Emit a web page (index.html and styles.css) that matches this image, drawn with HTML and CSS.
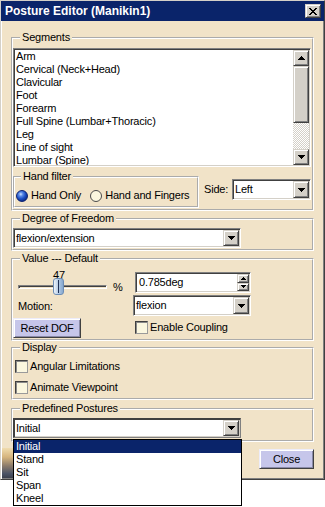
FILE: index.html
```html
<!DOCTYPE html>
<html>
<head>
<meta charset="utf-8">
<title>Posture Editor</title>
<link rel="stylesheet" href="styles.css">
</head>
<body>
<div class="window">
  <div class="titlebar">
    <span class="title">Posture Editor (Manikin1)</span>
    <span class="tclose raised"><svg width="8" height="7" viewBox="0 0 8 7"><path d="M0 0h2v1H0zM6 0h2v1H6zM1 1h2v1H1zM5 1h2v1H5zM2 2h4v1H2zM3 3h2v1H3zM2 4h4v1H2zM1 5h2v1H1zM5 5h2v1H5zM0 6h2v1H0zM6 6h2v1H6z"/></svg></span>
  </div>
  <div class="content">
    <fieldset class="group seg">
      <legend>Segments</legend>
      <div class="listbox sunken">
        <div class="items">
          <div class="item">Arm</div>
          <div class="item">Cervical (Neck+Head)</div>
          <div class="item">Clavicular</div>
          <div class="item">Foot</div>
          <div class="item">Forearm</div>
          <div class="item">Full Spine (Lumbar+Thoracic)</div>
          <div class="item">Leg</div>
          <div class="item">Line of sight</div>
          <div class="item">Lumbar (Spine)</div>
        </div>
        <div class="vscroll">
          <div class="sbtn raised"><svg width="7" height="4" viewBox="0 0 7 4"><path d="M3 0h1v1H3zM2 1h3v1H2zM1 2h5v1H1zM0 3h7v1H0z"/></svg></div>
          <div class="thumb raised"></div>
          <div class="track"></div>
          <div class="sbtn raised"><svg width="7" height="4" viewBox="0 0 7 4"><path d="M0 0h7v1H0zM1 1h5v1H1zM2 2h3v1H2zM3 3h1v1H3z"/></svg></div>
        </div>
      </div>
      <div class="hand-row">
        <fieldset class="group hand">
          <legend>Hand filter</legend>
          <div class="radios">
            <span class="radio first"><span class="rb on"></span>Hand Only</span>
            <span class="radio second"><span class="rb"></span>Hand and Fingers</span>
          </div>
        </fieldset>
        <div class="side">
          <span class="side-lbl">Side:</span>
          <div class="combo sunken side-combo"><span class="cval">Left</span><span class="dd raised"><svg width="7" height="4" viewBox="0 0 7 4"><path d="M0 0h7v1H0zM1 1h5v1H1zM2 2h3v1H2zM3 3h1v1H3z"/></svg></span></div>
        </div>
      </div>
    </fieldset>

    <fieldset class="group dof">
      <legend>Degree of Freedom</legend>
      <div class="combo sunken wide"><span class="cval">flexion/extension</span><span class="dd raised"><svg width="7" height="4" viewBox="0 0 7 4"><path d="M0 0h7v1H0zM1 1h5v1H1zM2 2h3v1H2zM3 3h1v1H3z"/></svg></span></div>
    </fieldset>

    <fieldset class="group value">
      <legend>Value --- Default</legend>
      <div class="vgrid">
        <div class="cell row1-left">
          <div class="slider">
            <span class="sval">47</span>
            <div class="trackline"></div>
            <span class="sthumb"></span>
          </div>
          <span class="pct">%</span>
        </div>
        <div class="cell row1-right">
          <div class="spin sunken">
            <span class="cval">0.785deg</span>
            <span class="spinbtns">
              <span class="sb raised"><svg width="5" height="3" viewBox="0 0 5 3"><path d="M2 0h1v1H2zM1 1h3v1H1zM0 2h5v1H0z"/></svg></span>
              <span class="sb raised"><svg width="5" height="3" viewBox="0 0 5 3"><path d="M0 0h5v1H0zM1 1h3v1H1zM2 2h1v1H2z"/></svg></span>
            </span>
          </div>
        </div>
        <div class="cell motion-lbl">Motion:</div>
        <div class="cell">
          <div class="combo sunken motion-combo"><span class="cval">flexion</span><span class="dd raised"><svg width="7" height="4" viewBox="0 0 7 4"><path d="M0 0h7v1H0zM1 1h5v1H1zM2 2h3v1H2zM3 3h1v1H3z"/></svg></span></div>
        </div>
        <div class="cell">
          <button class="btn reset">Reset DOF</button>
        </div>
        <div class="cell chkcell">
          <span class="chk"></span><span>Enable Coupling</span>
        </div>
      </div>
    </fieldset>

    <fieldset class="group disp">
      <legend>Display</legend>
      <div class="chkrow"><span class="chk"></span><span>Angular Limitations</span></div>
      <div class="chkrow"><span class="chk"></span><span>Animate Viewpoint</span></div>
    </fieldset>

    <fieldset class="group pre">
      <legend>Predefined Postures</legend>
      <div class="combo sunken wide focus"><span class="cval">Initial</span><span class="dd raised"><svg width="7" height="4" viewBox="0 0 7 4"><path d="M0 0h7v1H0zM1 1h5v1H1zM2 2h3v1H2zM3 3h1v1H3z"/></svg></span></div>
    </fieldset>

    <div class="bottom">
      <span class="pic"></span>
      <button class="btn close">Close</button>
    </div>
  </div>

  <div class="dropdown">
    <div class="opt sel">Initial</div>
    <div class="opt">Stand</div>
    <div class="opt">Sit</div>
    <div class="opt">Span</div>
    <div class="opt">Kneel</div>
  </div>
</div>
</body>
</html>
```

FILE: styles.css
```css
* { box-sizing: border-box; }
html, body { margin: 0; padding: 0; background: #fff; }
body {
  min-height: 507px;
  font-family: "Liberation Sans", Arial, sans-serif;
  font-size: 11px;
  line-height: 13px;
  letter-spacing: -0.2px;
  color: #000;
}
svg { display: block; }

.window {
  position: relative;
  width: 325px;
  height: 480px;
  display: flex;
  flex-direction: column;
  background: #f1e3c8;
  border: 1px solid;
  border-color: #d4d0c8 #404040 #404040 #d4d0c8;
  box-shadow: inset 1px 1px #fff, inset -1px -1px #808080;
}

.titlebar {
  flex: none;
  height: 20px;
  background: #0a246a;
  display: flex;
  align-items: center;
  justify-content: space-between;
  padding: 0 3px 0 4px;
}
.title { color: #fff; font-weight: bold; font-size: 12px; letter-spacing: 0; }

.raised {
  background: #d4d0c8;
  border: 1px solid;
  border-color: #d4d0c8 #404040 #404040 #d4d0c8;
  box-shadow: inset 1px 1px #fff, inset -1px -1px #808080;
}
.sunken {
  background: #fff;
  border: 1px solid;
  border-color: #808080 #fff #fff #808080;
  box-shadow: inset 1px 1px #404040, inset -1px -1px #d4d0c8;
  padding: 1px;
}

.tclose {
  width: 16px;
  height: 14px;
  display: flex;
  align-items: center;
  justify-content: center;
}

.content {
  flex: 1;
  display: flex;
  flex-direction: column;
  padding: 10px 10px 0;
}

.group {
  margin: 0;
  padding: 0;
  border: 2px groove #fff;
  min-width: 0;
}
.group > legend {
  margin-left: 7px;
  padding: 0 2px;
  line-height: 13px;
}

/* Segments */
.seg { padding: 4px 0 1px; }
.listbox { display: flex; width: 298px; height: 119px; }
.items { flex: 1; overflow: hidden; padding-left: 1px; }
.item { height: 13px; white-space: nowrap; }
.vscroll { width: 16px; display: flex; flex-direction: column; }
.sbtn { flex: none; height: 16px; display: flex; align-items: center; justify-content: center; }
.thumb { flex: none; height: 57px; }
.track {
  flex: 1;
  background-color: #fff;
  background-image: repeating-conic-gradient(#d4d0c8 0 25%, #fff 0 50%);
  background-size: 2px 2px;
}

.hand-row { display: flex; align-items: flex-start; margin-top: 3px; }
.hand { width: 186px; height: 38px; padding: 6px 0 0; }
.hand > legend { margin-left: 6px; }
.radios { display: flex; align-items: center; height: 13px; }
.radio { display: flex; align-items: center; white-space: nowrap; }
.radio.first { margin-left: 1px; }
.radio.second { margin-left: 9px; }
.rb {
  width: 12px;
  height: 12px;
  border-radius: 50%;
  margin-right: 3px;
  background: #fbf7df;
  border: 1px solid #4a4a4a;
}
.rb.on {
  border: 1px solid #0b2070;
  background: radial-gradient(circle at 38% 32%, #cfe0ff 0, #5a8ae6 22%, #1d4fc4 50%, #0a2a84 80%, #061a55 100%);
}

.side { display: flex; align-items: center; margin: 9px 0 0 5px; }
.side-lbl { width: 28px; }

.combo {
  display: flex;
  align-items: center;
  height: 20px;
}
.combo .cval { flex: 1; padding-left: 1px; white-space: nowrap; }
.dd {
  flex: none;
  width: 16px;
  height: 16px;
  display: flex;
  align-items: center;
  justify-content: center;
}
.side-combo { width: 79px; height: 21px; }
.side-combo .dd { height: 17px; }
.wide { width: 228px; }
.focus { border-color: #404040 #808080 #808080 #404040; }

/* DOF */
.dof { margin-top: 1px; padding: 3px 0 1px; }

/* Value */
.value { margin-top: 1px; padding: 0 0 1px; }
.vgrid {
  display: grid;
  grid-template-columns: 120px 120px;
  grid-template-rows: 30px 22px 21px;
}
.cell { display: flex; align-items: flex-start; }
.slider { position: relative; width: 95px; height: 30px; margin-left: 5px; }
.trackline {
  margin-top: 20px;
  width: 89px;
  height: 4px;
  border: 1px solid;
  border-color: #808080 #fff #fff #808080;
  box-shadow: inset 1px 1px #404040;
}
.sval { position: absolute; left: 35px; top: 4px; width: 12px; text-align: center; }
.sthumb {
  position: absolute;
  left: 35px;
  top: 13px;
  width: 11px;
  height: 17px;
  border-radius: 3px;
  border: 1px solid #6d8db5;
  background: linear-gradient(90deg, #eef4fb, #b7cde6 45%, #86a8cf);
}
.sthumb::after {
  content: "";
  position: absolute;
  left: 4px;
  top: 1px;
  bottom: 1px;
  width: 1px;
  background: #1e2f55;
}
.pct { margin-top: 16px; }
.spin {
  margin-top: 7px;
  margin-left: 2px;
  width: 116px;
  height: 21px;
  display: flex;
  align-items: center;
}
.spin .cval { flex: 1; padding-left: 2px; }
.spinbtns { width: 12px; height: 17px; display: flex; flex-direction: column; }
.sb { flex: 1; display: flex; align-items: center; justify-content: center; }
.motion-lbl { align-items: center; padding-left: 5px; height: 22px; }
.motion-combo { width: 118px; height: 21px; }
.motion-combo .dd { height: 17px; }

.btn {
  font: inherit;
  letter-spacing: inherit;
  color: #000;
  padding: 0;
  background: #c6c6ea;
  border: 1px solid;
  border-color: #ececfa #404040 #404040 #ececfa;
  box-shadow: inset 1px 1px #fff, inset -1px -1px #8a8aa8;
  height: 20px;
}
.reset { width: 68px; margin-top: 1px; }
.chkcell { align-items: center; padding-left: 2px; }
.chk {
  width: 13px;
  height: 13px;
  margin-right: 2px;
  flex: none;
  background: #fbf7df;
  border: 1px solid;
  border-color: #404040 #9a9a9a #9a9a9a #404040;
  box-shadow: inset 1px 1px #8a8a8a;
}

/* Display */
.disp { padding: 2px 0 0; }
.chkrow { height: 21px; display: flex; align-items: center; padding-left: 2px; }

/* Predefined */
.pre { margin-top: 2px; padding: 3px 0 2px; }

.bottom { display: flex; justify-content: space-between; height: 36px; flex: none; }
.pic {
  align-self: flex-end;
  margin-left: -9px;
  width: 12px;
  height: 30px;
  background: linear-gradient(180deg, #f0dcae 0%, #d6b57e 30%, #8a7a6a 60%, #4c5466 85%, #3a3f4c 100%);
}
.close { width: 55px; margin-top: 7px; }

.dropdown {
  position: absolute;
  z-index: 2;
  left: 12px;
  top: 438px;
  width: 229px;
  background: #fff;
  border: 1px solid #000;
}
.opt { height: 13px; padding-left: 2px; }
.opt.sel { background: #0a246a; color: #fff; }
```
